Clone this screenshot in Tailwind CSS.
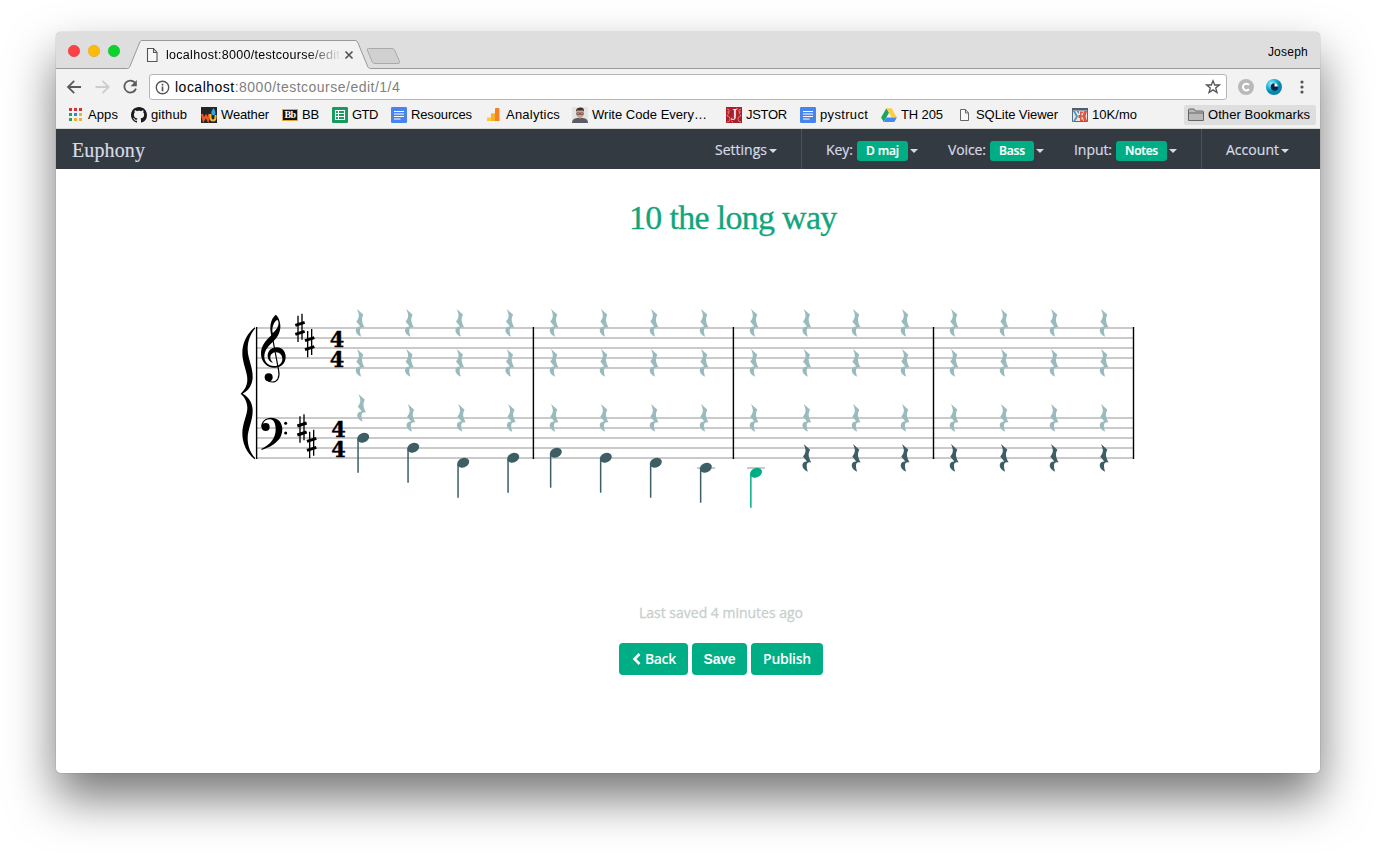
<!DOCTYPE html>
<html lang="en">
<head>
<meta charset="utf-8">
<title>Euphony</title>
<script src="https://cdn.jsdelivr.net/npm/@tailwindcss/browser@4"></script>
</head>
<body class="bg-white w-[1376px] h-[853px] overflow-hidden pt-8 pl-14">
<div class="w-[1264px] h-[741px] rounded-[5px] bg-white shadow-[0_0_1px_rgba(0,0,0,0.6),0_25px_48px_rgba(0,0,0,0.54)]">
 <div class="overflow-hidden rounded-[5px] h-full flex flex-col font-['Liberation_Sans',sans-serif] text-[13px] text-black">
  <!-- tab strip -->
  <header class="relative h-[37px] shrink-0 bg-[#dedede]">
   <svg class="absolute inset-0" width="1264" height="37" viewBox="56 32 1264 37">
    <path d="M56 68.5H127.5C129 68.5 129.500 67 130 66L139.500 43C140 41.500 140.700 40.500 142 40.500H355C356.500 40.500 357.300 41.500 358 43L367.500 66C368.300 68 369 68.500 370.500 68.500H1320V70H56Z" fill="#f2f2f2"/>
    <path d="M56 68.500H127.500C129 68.500 129.500 67 130 66L139.500 43C140 41.500 140.700 40.500 142 40.500H355C356.500 40.500 357.300 41.500 358 43L367.500 66C368.300 68 369 68.500 370.500 68.500H1320" fill="none" stroke="#999"/>
    <path d="M368.500 48.500H392Q394 48.500 394.800 50.500L399.500 61.500Q400 63.500 398 63.500H375Q373 63.500 372 61.500L367.300 50Q367 48.500 368.500 48.500Z" fill="#d0d0d0" stroke="#aaa"/>
    <circle cx="74" cy="51" r="5.700" fill="#fc4148" stroke="#e2383d" stroke-width=".6"/>
    <circle cx="94" cy="51" r="5.700" fill="#fdbc09" stroke="#e0a515" stroke-width=".6"/>
    <circle cx="114" cy="51" r="5.700" fill="#0bd32c" stroke="#12b62b" stroke-width=".6"/>
    <path d="M147.500 48.500H153.500L157 52.500V61.500H147.500ZM153.500 48.500V52.500H157" fill="#f8f8f8" stroke="#555" stroke-width="1.100"/>
    <path d="M345.500 51.500L352.500 58.500M352.500 51.500L345.500 58.500" stroke="#555" stroke-width="1.700"/>
   </svg>
   <div class="relative flex h-full items-center justify-between pl-[110px] pr-[12px] text-[12.500px]">
    <span class="mt-[9px] w-[174px] overflow-hidden whitespace-nowrap bg-gradient-to-r from-black from-80% to-black/5 bg-clip-text text-transparent"><span data-w="174">localhost:8000/testcourse/edit</span></span>
    <span class="mt-[3px] text-[12px]"><span data-w="40">Joseph</span></span>
   </div>
  </header>
  <!-- address bar -->
  <div class="flex h-[36px] shrink-0 items-center bg-[#f2f2f2]">
   <svg class="shrink-0" width="93" height="36" viewBox="56 69 93 36" fill="none" stroke-width="1.800">
    <path d="M81 87H68.500M74.200 80.800L68 87L74.200 93.200" stroke="#5a5a5a"/>
    <path d="M95.500 87H108M102.500 80.800L108.700 87L102.500 93.200" stroke="#ccc"/>
    <path d="M134.800 82.500A6 6 0 1 0 136 88.600" stroke="#5a5a5a"/><path d="M136.800 80V86.300H130.500Z" fill="#5a5a5a"/>
   </svg>
   <div class="flex h-[26px] w-[1078px] shrink-0 items-center rounded-[3px] border border-[#b5b5b5] bg-white">
    <svg class="ml-[5px] mr-[5px]" width="15" height="15" viewBox="0 0 15 15"><circle cx="7.500" cy="7.500" r="6.200" fill="none" stroke="#555" stroke-width="1.400"/><path d="M7.500 6.600V11.200M7.500 3.700V5.400" stroke="#555" stroke-width="1.700"/></svg>
    <span class="flex-1 text-[14px] text-[#808080]"><span data-w="225"><span class="text-black">localhost</span>:8000/testcourse/edit/1/4</span></span>
    <svg class="mr-[5px]" width="16" height="16" viewBox="0 0 16 16"><path d="M8 1.800L9.700 6H14.300L10.700 8.900L12 13.600L8 10.900L4 13.600L5.300 8.900L1.700 6H6.300Z" fill="none" stroke="#555" stroke-width="1.300"/></svg>
   </div>
   <svg width="93" height="36" viewBox="1227 69 93 36">
    <defs><radialGradient id="eye" cx=".35" cy=".3"><stop offset="0" stop-color="#a8eefa"/><stop offset=".6" stop-color="#22bce0"/><stop offset="1" stop-color="#0a86b0"/></radialGradient></defs>
    <circle cx="1246" cy="87" r="8" fill="#b9b9bb"/><path d="M1249 84.900A3.400 3.400 0 1 0 1249 89.200" fill="none" stroke="#fff" stroke-width="2"/>
    <circle cx="1274" cy="87" r="8" fill="url(#eye)"/><circle cx="1274.500" cy="87" r="3.700" fill="#124"/><path d="M1274.500 86.500V83A4 4 0 0 1 1278 86.500Z" fill="#e9fbff"/>
    <g fill="#555"><circle cx="1302" cy="82" r="1.600"/><circle cx="1302" cy="87" r="1.600"/><circle cx="1302" cy="92" r="1.600"/></g>
   </svg>
  </div>
  <!-- bookmarks -->
  <div class="flex h-[24px] shrink-0 items-center whitespace-nowrap border-b border-[#d5d8d5] bg-[#f2f2f2] pb-[3px] pl-[12px]">
   <div class="flex w-[63px] items-center gap-[4px]"><svg width="16" height="16" viewBox="0 0 16 16"><path fill="#dc2f2f" d="M1 1h3v3H1zM6 1h3v3H6zM11 1h3v3h-3z"/><path fill="#1fa355" d="M1 6h3v3H1z"/><path fill="#3c7ee0" d="M6 6h3v3H6z"/><path fill="#eeb12b" d="M11 6h3v3h-3zM6 11h3v3H6zM11 11h3v3h-3z"/><path fill="#1fa355" d="M1 11h3v3H1z"/></svg><span data-w="30">Apps</span></div>
   <div class="flex w-[70px] items-center gap-[4px]"><svg width="16" height="16" viewBox="0 0 16 16"><path fill="#1b1b1f" d="M8 0C3.580 0 0 3.580 0 8c0 3.540 2.290 6.530 5.470 7.590.4.070.55-.17.55-.38 0-.19-.01-.82-.01-1.490-2.010.37-2.530-.49-2.690-.94-.09-.23-.48-.94-.82-1.130-.28-.15-.68-.52-.01-.53.63-.01 1.080.58 1.230.82.72 1.210 1.870.87 2.330.66.07-.52.28-.87.51-1.070-1.780-.2-3.640-.89-3.640-3.950 0-.87.31-1.590.82-2.150-.08-.2-.36-1.020.08-2.120 0 0 .67-.21 2.200.82.64-.18 1.320-.27 2-.27s1.360.09 2 .27c1.530-1.040 2.200-.82 2.200-.82.44 1.100.16 1.920.08 2.120.51.56.82 1.270.82 2.150 0 3.070-1.870 3.750-3.650 3.950.29.25.54.73.54 1.480 0 1.070-.01 1.930-.01 2.200 0 .21.15.46.55.38A8.010 8.010 0 0 0 16 8c0-4.420-3.580-8-8-8z"/></svg><span data-w="36">github</span></div>
   <div class="flex w-[81px] items-center gap-[4px]"><svg width="16" height="16" viewBox="0 0 16 16"><path fill="#22262b" d="M0 0h16v16H0z"/><path d="M1 7l1.500 6 2.500-4 2 4 1.500-6" fill="none" stroke="#ec5a24" stroke-width="2.300"/><path d="M9.500 7v3.500q0 3 2.500 3t2.500-3V8" fill="none" stroke="#f5b52e" stroke-width="2"/><path d="M12.500 1Q9.500 5 10.500 7T14 7.500Q15.500 5 12.500 1Z" fill="#2baae2"/></svg><span data-w="48">Weather</span></div>
   <div class="flex w-[50px] items-center gap-[4px]"><span class="flex h-[12px] w-[16px] items-center justify-center border border-[#e3a63c] bg-[#111] font-['Liberation_Serif',serif] text-[10px] font-bold leading-none tracking-[-0.5px] text-white">Bb</span><span data-w="17">BB</span></div>
   <div class="flex w-[59px] items-center gap-[4px]"><svg width="16" height="16" viewBox="0 0 16 16"><rect width="16" height="16" rx="1.200" fill="#159b5b"/><path d="M3.500 3.500h9v9h-9zM3.500 6.500h9M3.500 9.500h9M6.500 3.500v9" fill="none" stroke="#fff" stroke-width="1.100"/></svg><span data-w="26">GTD</span></div>
   <div class="flex w-[95px] items-center gap-[4px]"><svg width="16" height="16" viewBox="0 0 16 16"><rect width="16" height="16" rx="1.200" fill="#4884ee"/><path d="M3 4.500h10M3 7h10M3 9.500h10M3 12h6.500" stroke="#fff" stroke-width="1.200"/></svg><span data-w="61">Resources</span></div>
   <div class="flex w-[86px] items-center gap-[4px]"><svg width="16" height="16" viewBox="0 0 16 16"><path fill="#fcc934" d="M1 10.500h4V6.500h4v7.500H1z"/><path fill="#fbb02a" d="M5 6.500h4V14H5z"/><path fill="#f58220" d="M9 2q0-1 1-1h2.500q1 0 1 1v12H9z"/></svg><span data-w="54">Analytics</span></div>
   <div class="flex w-[154px] items-center gap-[4px]"><svg width="16" height="16" viewBox="0 0 16 16"><path fill="#e3e3e3" d="M0 0h16v16H0z"/><path fill="#5a5d66" d="M0 16q0-4.500 5-5h6q5 .5 5 5z"/><ellipse cx="8" cy="6.500" rx="3.500" ry="5" fill="#d59f8a"/><path fill="#3e302d" d="M4 5Q3.500 1 8 .6T12 5L11 3.500H5z"/><path d="M4.700 5.800h2.800v1.800H4.700zM8.500 5.800h2.800v1.800H8.500z" fill="none" stroke="#433" stroke-width=".6"/></svg><span data-w="115">Write Code Every…</span></div>
   <div class="flex w-[74px] items-center gap-[4px]"><span class="relative flex h-4 w-4 items-center justify-center bg-[#ad1f28] font-['Liberation_Serif',serif] text-[16px] leading-none text-white"><svg class="absolute inset-0" width="16" height="16" viewBox="0 0 16 16" fill="none" stroke="#df8f8f" stroke-width=".8"><path d="M1 2q3 0 2 3T1 9q3 0 3 3t-3 3M15 2q-3 0-2 3t2 4q-3 0-3 3t3 3M1 5h2M13 5h2M5 14l2 1M10 1l2 1"/></svg>J</span><span data-w="41">JSTOR</span></div>
   <div class="flex w-[81px] items-center gap-[4px]"><svg width="16" height="16" viewBox="0 0 16 16"><rect width="16" height="16" rx="1.200" fill="#4884ee"/><path d="M3 4.500h10M3 7h10M3 9.500h10M3 12h6.500" stroke="#fff" stroke-width="1.200"/></svg><span data-w="48">pystruct</span></div>
   <div class="flex w-[75px] items-center gap-[4px]"><svg width="16" height="16" viewBox="0 0 16 16"><path fill="#1da362" d="M5.400 1.200L8 5.800 2.700 15 .1 10.400z"/><path fill="#ffcd40" d="M5.400 1.200h5.200l5.300 9.200h-5.200z"/><path fill="#4688f4" d="M5.300 10.400h10.600L13.300 15H2.700z"/></svg><span data-w="42">TH 205</span></div>
   <div class="flex w-[116px] items-center gap-[4px]"><svg width="16" height="16" viewBox="0 0 16 16"><path d="M4.500 2.500h5L12.500 6v7.500h-8zM9.500 2.500V6h3" fill="#f8f8f8" stroke="#666"/></svg><span data-w="82">SQLite Viewer</span></div>
   <div class="flex w-[112px] items-center gap-[4px]"><svg width="16" height="16" viewBox="0 0 16 16"><path fill="#e9e4dc" stroke="#5b6b78" d="M.5 2h15v12.500H.5z"/><path fill="#4b5f70" d="M0 1h16v2.500H0z"/><path fill="#3b97cb" d="M1 4h2l3 5.500-3 5H1l3-5z"/><path fill="#3b97cb" d="M4.500 4H7v3z"/><path fill="#df5440" d="M8 4.500h3v1.500H9.500v2.500H11V10H9.500v2.500H11V14H8v-3H6.500V8H8zM12 4h3l-1.500 5.500L15 14h-3l-1.500-4.500z"/></svg><span data-w="45">10K/mo</span></div>
   <div class="flex h-[20px] w-[132px] items-center gap-[4px] rounded-[2px] bg-[#dedede] pl-[4px]"><svg width="16" height="16" viewBox="0 0 16 16"><path d="M.5 13.500V3Q.5 2 1.500 2H6L7.500 4H14.500Q15.500 4 15.500 5V13.500ZM.5 6H15.500" fill="#b9b9b9" stroke="#666"/></svg><span data-w="102">Other Bookmarks</span></div>
  </div>
  <!-- site navigation -->
  <nav class="flex h-[40px] shrink-0 items-center whitespace-nowrap bg-[#333a42] pl-[16px] font-['Open_Sans',sans-serif] text-[14px] font-medium text-[#d7dbe6] [-webkit-text-stroke:0.2px]">
   <div class="w-[643px] pt-[1px] font-['Liberation_Serif',serif] text-[20px] font-normal"><span data-w="73">Euphony</span></div>
   <div class="flex h-full w-[87px] items-center gap-[2px] border-r border-[#4a535d] pt-[1px]"><span data-w="52">Settings</span><i class="mt-[2px] border-x-4 border-t-4 border-x-transparent border-t-[#d7dbe6]"></i></div>
   <div class="flex h-full w-[122px] items-center gap-[4px] pl-[24px] pt-[1px]"><span class="w-[27px]"><span data-w="27">Key:</span></span><span class="mt-[2px] flex h-[20px] w-[51px] items-center justify-center rounded-[3px] bg-[#00ae85] text-[12px] font-semibold text-white"><span data-w="33">D maj</span></span><i class="ml-[-2px] mt-[3px] border-x-4 border-t-4 border-x-transparent border-t-[#d7dbe6]"></i></div>
   <div class="flex h-full w-[126px] items-center gap-[4px] pl-[24px] pt-[1px]"><span class="w-[38px]"><span data-w="38">Voice:</span></span><span class="mt-[2px] flex h-[20px] w-[44px] items-center justify-center rounded-[3px] bg-[#00ae85] text-[12px] font-semibold text-white"><span data-w="26">Bass</span></span><i class="ml-[-2px] mt-[3px] border-x-4 border-t-4 border-x-transparent border-t-[#d7dbe6]"></i></div>
   <div class="flex h-full w-[152px] items-center gap-[4px] border-r border-[#4a535d] pl-[24px] pt-[1px]"><span class="w-[38px]"><span data-w="38">Input:</span></span><span class="mt-[2px] flex h-[20px] w-[51px] items-center justify-center rounded-[3px] bg-[#00ae85] text-[12px] font-semibold text-white"><span data-w="33">Notes</span></span><i class="ml-[-2px] mt-[3px] border-x-4 border-t-4 border-x-transparent border-t-[#d7dbe6]"></i></div>
   <div class="flex h-full items-center gap-[2px] pl-[24px] pt-[1px]"><span data-w="53">Account</span><i class="mt-[2px] border-x-4 border-t-4 border-x-transparent border-t-[#d7dbe6]"></i></div>
  </nav>
  <!-- exercise -->
  <main class="flex flex-1 flex-col bg-white font-['Open_Sans',sans-serif]">
   <h1 class="h-[131px] pl-[573px] pt-[27px] font-['Liberation_Serif',serif] text-[34px] leading-[44px] text-[#12a57b] [-webkit-text-stroke:0.3px]"><span data-w="208">10 the long way</span></h1>
   <svg class="shrink-0" width="1264" height="220" viewBox="56 300 1264 220">
    <defs>
     <path id="rest" d="M1 0L7.400 5.800C5.400 9.500 5.200 12 8.600 18.600C6 17.800 4 18.800 4 21.500C4 24 4.500 26 5.200 27.700C1.800 26.500 -.3 23.500 -.3 21.500C-.3 18.500 1.600 17.300 4.300 17.400L.3 12.600C3 9.500 3.400 7 2.300 3.600Z"/>
     <g id="sharp" fill="none" stroke="#000"><path d="M189 47V126M201 41V119" stroke-width="4"/><path d="M181 76L209 67M181 103L209 94" stroke-width="9"/></g>
     <g id="note"><ellipse rx="6.200" ry="4.700" transform="rotate(-24)"/><path d="M-5.900 1H-4.400V35H-5.900Z"/></g>
    </defs>
    <path d="M256 328H1134M256 338H1134M256 348H1134M256 358H1134M256 368H1134M256 418H1134M256 428H1134M256 438H1134M256 448H1134M256 458H1134M697 468H715M747 468H765" stroke="#b9b9b9" stroke-width="1.600"/>
    <path d="M256.600 327V459M533.400 327V459M733.400 327V459M933.500 327V459M1133.500 327V459" stroke="#000" stroke-width="1.400"/>
    <g transform="translate(235 300) scale(.33333)">
     <path d="M59 82C34 104 22 130 22 160C22 190 38 218 37 240C36 258 29 270 17 281C29 292 36 304 37 322C38 344 22 370 22 400C22 430 34 458 59 478L61 475C44 456 38 436 38 414C38 388 54 360 53 330C52 308 42 291 23 281C42 271 52 254 53 232C54 202 38 176 38 148C38 126 44 105 61 85Z"/>
     <path fill-rule="evenodd" d="M122 44C106 58 103 82 109 106C92 122 78 138 78 161C78 186 96 203 118 203C138 203 152 190 152 171C152 153 140 142 126 142C108 142 98 154 98 167C98 178 105 186 114 188C108 182 106 178 106 172C106 163 114 157 123 157C135 157 142 166 142 177C142 190 132 198 117 198C99 198 88 184 88 170C88 149 102 136 117 122C130 109 137 94 136 76C135 62 130 49 122 44ZM127 59C131 63 132 71 129 78C126 87 119 94 113 99C110 84 115 66 127 59Z"/>
     <path d="M110 100L131 212C135 233 127 246 112 246C106 246 100 244 95 240" fill="none" stroke="#000" stroke-width="3.500"/><circle cx="101" cy="232" r="12"/>
     <path d="M79 384C76 364 92 353 108 353C130 353 142 368 142 388C142 418 118 438 80 450L79 447C108 433 122 414 122 388C122 370 116 358 105 358C94 358 86 363 84 373Z"/><circle cx="92" cy="381" r="12"/>
     <circle cx="152" cy="370" r="4.500"/><circle cx="152" cy="399" r="4.500"/>
     <use href="#sharp"/><use href="#sharp" x="29" y="46"/><use href="#sharp" x="6" y="302"/><use href="#sharp" x="35" y="348"/>
    </g>
    <g font-family="DejaVu Serif" font-weight="bold" font-size="22.500" stroke="#000" stroke-width=".4">
     <text transform="translate(329.700 347.400) scale(.93 1)">4</text><text transform="translate(329.700 367.400) scale(.93 1)">4</text>
     <text transform="translate(331.200 437.400) scale(.93 1)">4</text><text transform="translate(331.200 457.400) scale(.93 1)">4</text>
    </g>
    <g id="rests"></g>
    <g id="notes" fill="#3c5e64"></g>
   </svg>
   <p class="mt-[81px] pl-[583px] text-[14px] font-medium leading-[24px] text-[#c8d0cd] [-webkit-text-stroke:0.3px]"><span data-w="164">Last saved 4 minutes ago</span></p>
   <div class="mt-[18px] flex gap-[4px] pl-[563px] text-[14px] font-semibold text-white">
    <button class="flex h-[32px] w-[69px] items-center rounded-[4px] bg-[#00ae85] pb-[1px] pl-[13px]"><svg class="mr-[4px]" width="9" height="12" viewBox="0 0 9 12"><path d="M7.500 1L2.500 6L7.500 11" fill="none" stroke="#fff" stroke-width="2.600"/></svg><span data-w="31">Back</span></button>
    <button class="h-[32px] w-[55px] rounded-[4px] bg-[#00ae85] font-['Liberation_Sans',sans-serif] font-bold"><span data-w="32">Save</span></button>
    <button class="h-[32px] w-[72px] rounded-[4px] bg-[#00ae85] pb-[1px]"><span data-w="48">Publish</span></button>
   </div>
  </main>
 </div>
</div>
<script>
 const xs = [356,405.3,455.7,505.7,550,600,650,700,750,802.7,852,901,950,1000,1050,1100];
 let r = '';
 const rest = (x, y, c) => { r += `<use href="#rest" x="${x}" y="${y}" fill="${c}"/>`; };
 xs.forEach((x, i) => {
  rest(x, 309, '#99bbbd'); rest(x, 349, '#99bbbd');
  rest(x + (i < 4 ? 1.5 : 0), i ? 404 : 394, '#99bbbd');
  if (i > 8) rest(x, 444, '#3c5e64');
 });
 document.getElementById('rests').innerHTML = r;
 document.getElementById('notes').innerHTML = [[363.2,437.7],[413.2,447.7],[463.2,462.7],[513.2,457.7],[555.8,452.7],[605.8,457.7],[655.8,462.7],[705.8,467.7],[756,472.7,'#00ae85']]
  .map(n => `<use href="#note" x="${n[0]}" y="${n[1]}"${n[2] ? ` fill="${n[2]}"` : ''}/>`).join('');
 // Spread each label's letters over its set width, again whenever the layout changes.
 const labels = [...document.querySelectorAll('[data-w]')];
 const fit = () => labels.forEach(e => {
  e.style.whiteSpace = 'nowrap';
  e.style.letterSpacing = '0px';
  const range = document.createRange();
  range.selectNodeContents(e);
  const w = range.getBoundingClientRect().width;
  e.style.letterSpacing = ((+e.dataset.w - w) / (e.textContent.length - 0.5)) + 'px';
 });
 fit();
 addEventListener('load', fit);
 const watch = new ResizeObserver(fit);
 watch.observe(document.body);
 watch.observe(document.querySelector('h1'));
</script>
</body>
</html>
